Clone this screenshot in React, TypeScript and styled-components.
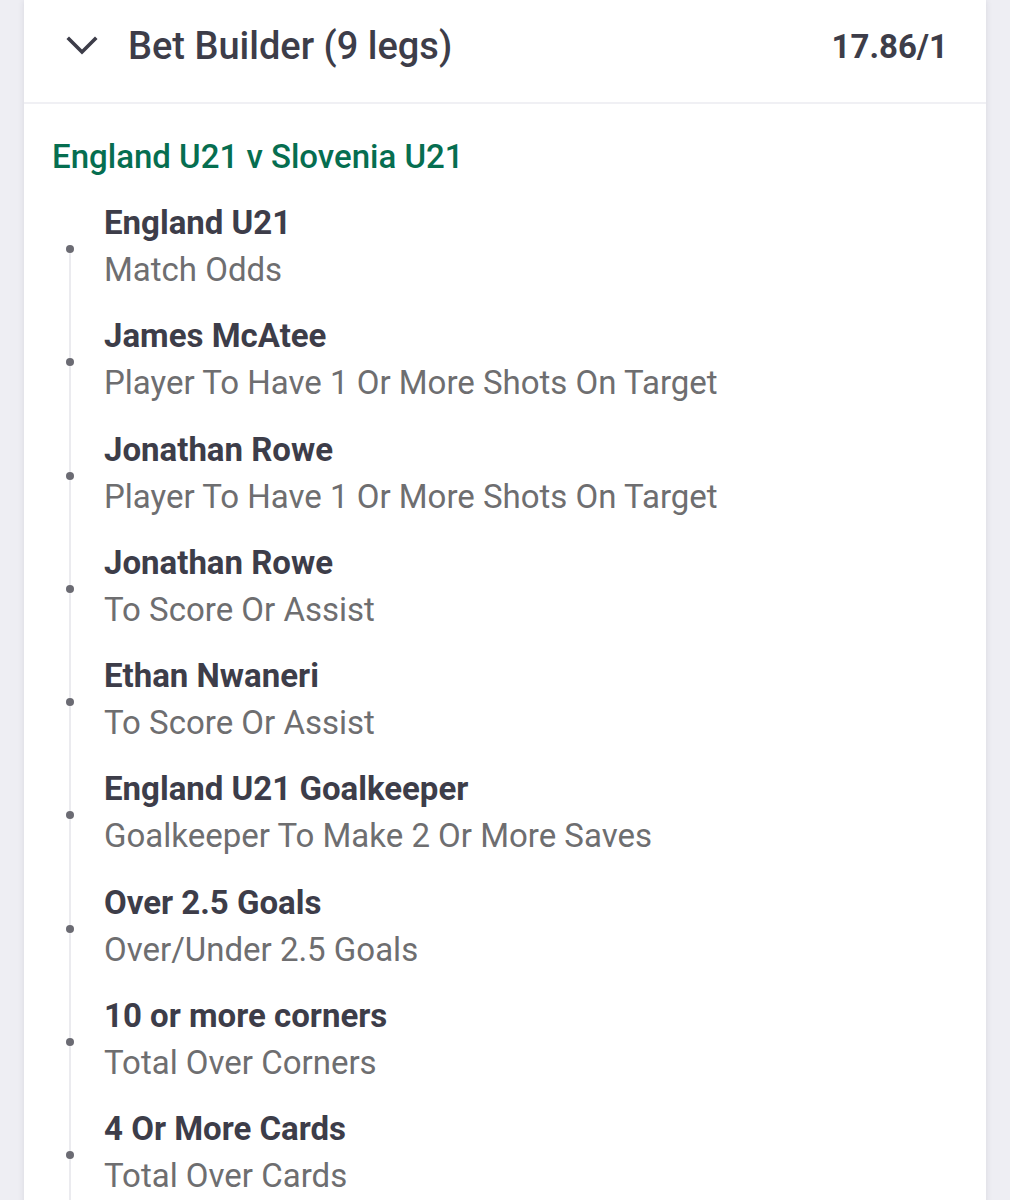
import styled, { createGlobalStyle } from "styled-components";

type Leg = {
  selection: string;
  market: string;
};

const legs: Leg[] = [
  { selection: "England U21", market: "Match Odds" },
  { selection: "James McAtee", market: "Player To Have 1 Or More Shots On Target" },
  { selection: "Jonathan Rowe", market: "Player To Have 1 Or More Shots On Target" },
  { selection: "Jonathan Rowe", market: "To Score Or Assist" },
  { selection: "Ethan Nwaneri", market: "To Score Or Assist" },
  { selection: "England U21 Goalkeeper", market: "Goalkeeper To Make 2 Or More Saves" },
  { selection: "Over 2.5 Goals", market: "Over/Under 2.5 Goals" },
  { selection: "10 or more corners", market: "Total Over Corners" },
  { selection: "4 Or More Cards", market: "Total Over Cards" },
];

const GlobalStyle = createGlobalStyle`
  html, body {
    margin: 0;
    padding: 0;
    background: #eeeef3;
  }
  body {
    font-family: Roboto, "Noto Sans", sans-serif;
    -webkit-font-smoothing: antialiased;
  }
`;

const ChevronDown = () => (
  <svg width="32" height="20" viewBox="0 0 32 20" fill="none">
    <path
      d="M3 3 L16 16 L29 3"
      stroke="#3d3d49"
      strokeWidth="3.6"
      strokeLinecap="square"
    />
  </svg>
);

const App = () => {
  return (
    <>
      <GlobalStyle />
      <Page>
        <Card>
          <Header>
            <ChevronDown />
            <Title>Bet Builder (9 legs)</Title>
            <Odds>17.86/1</Odds>
          </Header>

          <EventName>England U21 v Slovenia U21</EventName>

          <LegList>
            {legs.map((leg, index) => (
              <LegRow key={index}>
                <Rail>
                  <RailLine $visible={index > 0} $fixed />
                  <Dot />
                  <RailLine $visible />
                </Rail>
                <LegText>
                  <Selection>{leg.selection}</Selection>
                  <Market>{leg.market}</Market>
                </LegText>
              </LegRow>
            ))}
          </LegList>
        </Card>
      </Page>
    </>
  );
};

const Page = styled.div`
  width: 1010px;
  height: 1200px;
  overflow: hidden;
  padding: 0 24px;
  box-sizing: border-box;
`;

const Card = styled.div`
  background: #ffffff;
  min-height: 1200px;
  box-shadow: 0 0 6px rgba(60, 60, 90, 0.12);
`;

const Header = styled.div`
  display: flex;
  align-items: center;
  box-sizing: border-box;
  height: 104px;
  padding: 0 38px 10px 42px;
  border-bottom: 2px solid #f0f0f4;
`;

const Title = styled.div`
  flex: 1;
  margin-left: 30px;
  font-size: 38px;
  font-weight: 500;
  color: #3d3d49;
`;

const Odds = styled.div`
  font-size: 33px;
  font-weight: 700;
  color: #3d3d49;
`;

const EventName = styled.div`
  padding: 33px 0 0 28px;
  line-height: 40px;
  font-size: 33px;
  font-weight: 500;
  color: #066e50;
`;

const LegList = styled.div`
  display: flex;
  flex-direction: column;
  padding-top: 22px;
`;

const LegRow = styled.div`
  display: flex;
  gap: 22px;
  padding-left: 34px;
`;

const Rail = styled.div`
  width: 24px;
  display: flex;
  flex-direction: column;
  align-items: center;
`;

const RailLine = styled.div<{ $visible: boolean; $fixed?: boolean }>`
  width: 2px;
  background: ${({ $visible }) => ($visible ? "#ebebef" : "transparent")};
  ${({ $fixed }) => ($fixed ? "height: 46px;" : "flex: 1;")}
`;

const Dot = styled.div`
  width: 8px;
  height: 8px;
  border-radius: 50%;
  background: #6b6b73;
  flex-shrink: 0;
`;

const LegText = styled.div`
  display: flex;
  flex-direction: column;
  padding-bottom: 19.25px;
`;

const Selection = styled.div`
  font-size: 33px;
  line-height: 47px;
  font-weight: 700;
  color: #3d3d49;
`;

const Market = styled.div`
  font-size: 33px;
  line-height: 47px;
  font-weight: 400;
  color: #6e6e70;
`;

export default App;
